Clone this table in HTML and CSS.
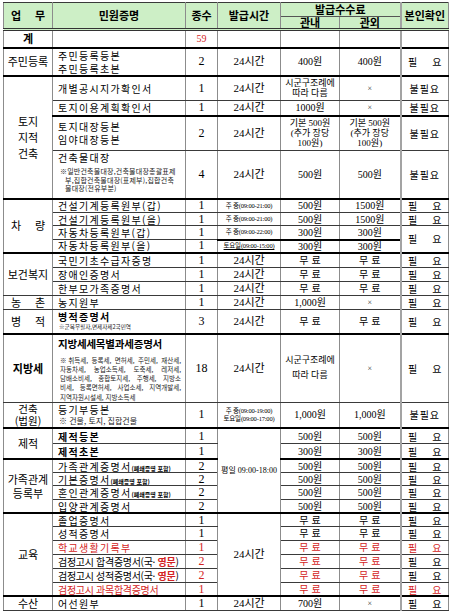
FILE: index.html
```html
<!DOCTYPE html>
<html lang="ko">
<head>
<meta charset="utf-8">
<title>민원증명 발급 안내</title>
<link rel="stylesheet" href="styles.css">
</head>
<body>
<table class="tbl">
<colgroup>
<col class="c1"><col class="c2"><col class="c3"><col class="c4"><col class="c5"><col class="c6"><col class="c7">
</colgroup>
<thead>
<tr class="h1"><th rowspan="2" class="dbl"><span class="sp"><span>업</span><span>무</span></span></th><th rowspan="2" class="dbl">민원증명</th><th rowspan="2" class="dbl">종수</th><th rowspan="2" class="dbl">발급시간</th><th colspan="2" class="fee">발급수수료</th><th rowspan="2" class="dbl k">본인확인</th></tr>
<tr class="h2"><th class="dbl">관내</th><th class="dbl">관외</th></tr>
</thead>
<tbody>
<tr class="r18"><td class="cat b">계</td><td class="n"></td><td class="num red small">59</td><td></td><td></td><td></td><td class="k"></td></tr>

<tr class="r27 g"><td class="cat">주민등록</td><td class="n two">주민등록등본<br>주민등록초본</td><td class="num">2</td><td class="t">24시간</td><td class="f">400원</td><td class="f">400원</td><td class="k"><span class="py"><span>필</span><span>요</span></span></td></tr>

<tr class="r25 g"><td class="cat c3l" rowspan="4">토지<br>지적<br>건축</td><td class="n">개별공시지가확인서</td><td class="num">1</td><td class="t">24시간</td><td class="f s9">시군구조례에<br>따라 다름</td><td class="f x">×</td><td class="k bp">불필요</td></tr>
<tr class="r15"><td class="n">토지이용계획확인서</td><td class="num">1</td><td class="t">24시간</td><td class="f">1000원</td><td class="f x">×</td><td class="k bp">불필요</td></tr>
<tr class="r35 g"><td class="n two">토지대장등본<br>임야대장등본</td><td class="num">2</td><td class="t">24시간</td><td class="f s9">기본 500원<br>(추가 장당<br>100원)</td><td class="f s9">기본 500원<br>(추가 장당<br>100원)</td><td class="k bp">불필요</td></tr>
<tr class="r48"><td class="n top"><div class="nm">건축물대장</div><div class="note1"><span class="ln">※일반건축물대장,건축물대장총괄표제</span><span class="ln ind">부,집합건축물대장(표제부),집합건축</span><span class="ln ind">물대장(전유부분)</span></div></td><td class="num">4</td><td class="t">24시간</td><td class="f">500원</td><td class="f">500원</td><td class="k bp">불필요</td></tr>

<tr class="r14 g"><td class="cat" rowspan="4"><span class="sp"><span>차</span><span>량</span></span></td><td class="n">건설기계등록원부(갑)</td><td class="num">1</td><td class="t tt">주 중(09:00-21:00)</td><td class="f">500원</td><td class="f">1500원</td><td class="k"><span class="py"><span>필</span><span>요</span></span></td></tr>
<tr class="r13"><td class="n">건설기계등록원부(을)</td><td class="num">1</td><td class="t tt">주 중(09:00-21:00)</td><td class="f">500원</td><td class="f">1500원</td><td class="k"><span class="py"><span>필</span><span>요</span></span></td></tr>
<tr class="r14"><td class="n">자동차등록원부(갑)</td><td class="num">1</td><td class="t tt">주 중(09:00-22:00)</td><td class="f">300원</td><td class="f">300원</td><td class="k" rowspan="2"><span class="py"><span>필</span><span>요</span></span></td></tr>
<tr class="r13 mid"><td class="n">자동차등록원부(을)</td><td class="num">1</td><td class="t tt ul">토요일(09:00-15:00)</td><td class="f">300원</td><td class="f">300원</td></tr>

<tr class="r15 g"><td class="cat" rowspan="3">보건복지</td><td class="n">국민기초수급자증명</td><td class="num">1</td><td class="t">24시간</td><td class="f"><span class="ml"><span>무</span><span>료</span></span></td><td class="f"><span class="ml"><span>무</span><span>료</span></span></td><td class="k"><span class="py"><span>필</span><span>요</span></span></td></tr>
<tr class="r14"><td class="n">장애인증명서</td><td class="num">1</td><td class="t">24시간</td><td class="f"><span class="ml"><span>무</span><span>료</span></span></td><td class="f"><span class="ml"><span>무</span><span>료</span></span></td><td class="k"><span class="py"><span>필</span><span>요</span></span></td></tr>
<tr class="r14"><td class="n">한부모가족증명서</td><td class="num">1</td><td class="t">24시간</td><td class="f"><span class="ml"><span>무</span><span>료</span></span></td><td class="f"><span class="ml"><span>무</span><span>료</span></span></td><td class="k"><span class="py"><span>필</span><span>요</span></span></td></tr>

<tr class="r14"><td class="cat"><span class="sp"><span>농</span><span>촌</span></span></td><td class="n">농지원부</td><td class="num">1</td><td class="t">24시간</td><td class="f">1,000원</td><td class="f x">×</td><td class="k"><span class="py"><span>필</span><span>요</span></span></td></tr>

<tr class="r24"><td class="cat"><span class="sp"><span>병</span><span>적</span></span></td><td class="n top"><div class="nm bd">병적증명서</div><div class="note2">※군복무필자,면제자제2국민역</div></td><td class="num">3</td><td class="t">24시간</td><td class="f"><span class="ml"><span>무</span><span>료</span></span></td><td class="f"><span class="ml"><span>무</span><span>료</span></span></td><td class="k"><span class="py"><span>필</span><span>요</span></span></td></tr>

<tr class="r66 g"><td class="cat b">지방세</td><td class="n top"><div class="nm bd wide">지방세세목별과세증명서</div><div class="note3"><span class="ln just">※취득세, 등록세, 면허세, 주민세, 재산세,</span><span class="ln just">자동차세, 농업소득세, 도축세, 레저세,</span><span class="ln just">담배소비세, 종합토지세, 주행세, 지방소</span><span class="ln just">비세, 등록면허세, 사업소세, 지역개발세,</span><span class="ln">지역자원시설세, 지방소득세</span></div></td><td class="num">18</td><td class="t">24시간</td><td class="f s9 loose">시군구조례에<br>따라 다름</td><td class="f x">×</td><td class="k"><span class="py"><span>필</span><span>요</span></span></td></tr>

<tr class="r24"><td class="cat two law">건축<br>(법원)</td><td class="n top"><div class="nm">등기부등본</div><div class="note4">※ 건물, 토지, 집합건물</div></td><td class="num">1</td><td class="t tt">주 중(09:00-19:00)<br>토요일(09:00-17:00)</td><td class="f">1,000원</td><td class="f">1,000원</td><td class="k bp">불필요</td></tr>

<tr class="r16 g"><td class="cat" rowspan="2">제적</td><td class="n bd">제적등본</td><td class="num">1</td><td class="t wk" rowspan="6">평일 09:00-18:00</td><td class="f">500원</td><td class="f">500원</td><td class="k"><span class="py"><span>필</span><span>요</span></span></td></tr>
<tr class="r15"><td class="n bd">제적초본</td><td class="num">1</td><td class="f">300원</td><td class="f">300원</td><td class="k"><span class="py"><span>필</span><span>요</span></span></td></tr>

<tr class="r14 g"><td class="cat two" rowspan="4">가족관계<br>등록부</td><td class="n">가족관계증명서<span class="tiny">(폐쇄증명 포함)</span></td><td class="num">2</td><td class="f">500원</td><td class="f">500원</td><td class="k"><span class="py"><span>필</span><span>요</span></span></td></tr>
<tr class="r13"><td class="n">기본증명서<span class="tiny">(폐쇄증명 포함)</span></td><td class="num">2</td><td class="f">500원</td><td class="f">500원</td><td class="k"><span class="py"><span>필</span><span>요</span></span></td></tr>
<tr class="r14"><td class="n">혼인관계증명서<span class="tiny">(폐쇄증명 포함)</span></td><td class="num">2</td><td class="f">500원</td><td class="f">500원</td><td class="k"><span class="py"><span>필</span><span>요</span></span></td></tr>
<tr class="r13"><td class="n">입양관계증명서</td><td class="num">2</td><td class="f">500원</td><td class="f">500원</td><td class="k"><span class="py"><span>필</span><span>요</span></span></td></tr>

<tr class="r14 g"><td class="cat" rowspan="6">교육</td><td class="n">졸업증명서</td><td class="num">1</td><td class="t" rowspan="6">24시간</td><td class="f"><span class="ml"><span>무</span><span>료</span></span></td><td class="f"><span class="ml"><span>무</span><span>료</span></span></td><td class="k"><span class="py"><span>필</span><span>요</span></span></td></tr>
<tr class="r14"><td class="n">성적증명서</td><td class="num">1</td><td class="f"><span class="ml"><span>무</span><span>료</span></span></td><td class="f"><span class="ml"><span>무</span><span>료</span></span></td><td class="k"><span class="py"><span>필</span><span>요</span></span></td></tr>
<tr class="r14"><td class="n red">학교생활기록부</td><td class="num red">1</td><td class="f red"><span class="ml"><span>무</span><span>료</span></span></td><td class="f red"><span class="ml"><span>무</span><span>료</span></span></td><td class="k red"><span class="py"><span>필</span><span>요</span></span></td></tr>
<tr class="r14"><td class="n nar">검정고시 합격증명서(국· <span class="red b">영문</span>)</td><td class="num red">2</td><td class="f red"><span class="ml"><span>무</span><span>료</span></span></td><td class="f red"><span class="ml"><span>무</span><span>료</span></span></td><td class="k"><span class="py"><span>필</span><span>요</span></span></td></tr>
<tr class="r14"><td class="n nar">검정고시 성적증명서(국· <span class="red b">영문</span>)</td><td class="num red">2</td><td class="f red"><span class="ml"><span>무</span><span>료</span></span></td><td class="f red"><span class="ml"><span>무</span><span>료</span></span></td><td class="k"><span class="py"><span>필</span><span>요</span></span></td></tr>
<tr class="r13"><td class="n nar red">검정고시 과목합격증명서</td><td class="num red">1</td><td class="f red"><span class="ml"><span>무</span><span>료</span></span></td><td class="f red"><span class="ml"><span>무</span><span>료</span></span></td><td class="k red"><span class="py"><span>필</span><span>요</span></span></td></tr>

<tr class="r14 g"><td class="cat">수산</td><td class="n">어선원부</td><td class="num">1</td><td class="t">24시간</td><td class="f">700원</td><td class="f x">×</td><td class="k"><span class="py"><span>필</span><span>요</span></span></td></tr>
</tbody>
</table>
</body>
</html>
```

FILE: styles.css
```css
* { box-sizing: border-box; }
html, body { margin: 0; padding: 0; background: #ffffff; }

.tbl {
  border-collapse: collapse;
  table-layout: fixed;
  width: 445px;
  margin: 2px 0 0 3px;
  font-family: "Liberation Serif", "Noto Sans CJK KR", serif;
  font-size: 10px;
  color: #000;
}
.c1 { width: 49px; }
.c2 { width: 133px; }
.c3 { width: 32px; }
.c4 { width: 63px; }
.c5 { width: 59px; }
.c6 { width: 61px; }
.c7 { width: 48px; }

.tbl th, .tbl td {
  border-left: 1px solid #8c8c8c;
  border-right: 1px solid #8c8c8c;
  border-top: 1px solid #3a3a3a;
  border-bottom: 1px solid #3a3a3a;
  padding: 0 1px;
  text-align: center;
  vertical-align: middle;
  line-height: 11px;
  white-space: nowrap;
}

.tbl th {
  background: #cdefc6;
  font-family: "Noto Sans CJK KR", sans-serif;
  font-weight: 700;
  font-size: 11px;
  line-height: 11px;
}
.tbl th.dbl { border-bottom: 3px double #333; }
.tbl th.fee { border-bottom: 1px solid #555; }
.h1 { height: 14px; }
.h2 { height: 11px; }

.tbl .k { border-left: 2px solid #a3a3a3; }

.r13 { height: 13px; }
.r14 { height: 14px; }
.r15 { height: 15px; }
.r16 { height: 16px; }
.r18 { height: 18px; }
.r24 { height: 24px; }
.r25 { height: 25px; }
.r27 { height: 27px; }
.r35 { height: 35px; }
.r48 { height: 48px; }
.r66 { height: 66px; }

.tbl tr.g > td { border-top: 2px solid #000; }
.tbl tr.mid > td.f { border-top: 2px solid #000; }
.tbl tr.mid > td.tt { border-top: 2px solid #000; }

.cat {
  font-family: "Noto Sans CJK KR", sans-serif;
  font-size: 11px;
}
.tbl td.cat { line-height: 13px; }
.tbl td.cat.c3l { line-height: 16px; }
.tbl td.cat.two { line-height: 14px; }
.tbl td.cat.law { font-size: 10.5px; line-height: 12px; }

.sp, .py, .ml { display: inline-flex; justify-content: center; }
.sp { gap: 14px; }
.py { gap: 15px; }
.ml { gap: 3px; }
.b { font-weight: 700; }
.bd { font-weight: 700; }

.tbl td.n {
  text-align: left;
  padding-left: 5px;
  padding-right: 0;
  font-family: "Noto Sans CJK KR", sans-serif;
  font-size: 10px;
  letter-spacing: 1.3px;
}
.tbl td.n.two { line-height: 13px; }
.tbl td.n.nar { letter-spacing: -0.3px; }
.tbl td.top { vertical-align: top; padding-top: 1px; }
.nm { line-height: 12px; }
.nm.wide { letter-spacing: -0.2px; font-size: 10.5px; line-height: 14px; padding-top: 1px; }

.ln { display: block; text-align: left; white-space: nowrap; }
.ln.just { text-align: justify; text-align-last: justify; }

.note1 {
  font-size: 7px;
  line-height: 8.6px;
  letter-spacing: 0.2px;
  margin-top: 3px;
  padding-left: 2px;
  padding-right: 1px;
  color: #222;
}
.note1 .ind { padding-left: 5px; }
.note2 {
  white-space: nowrap;
  font-size: 5.6px;
  line-height: 8px;
  letter-spacing: 0;
  padding-left: 1px;
  color: #222;
}
.note3 {
  font-size: 6.5px;
  line-height: 9.3px;
  letter-spacing: 0;
  padding-left: 2px;
  padding-right: 4px;
  margin-top: 5px;
  color: #222;
}
.note4 {
  white-space: nowrap;
  font-size: 8px;
  line-height: 9px;
  letter-spacing: 0;
  padding-left: 1px;
  color: #222;
}

.tiny {
  font-size: 6px;
  line-height: 6px;
  font-weight: 700;
  letter-spacing: 0;
}

.num {
  font-size: 12px;
  font-family: "Liberation Serif", serif;
}
.num.small { font-size: 10px; }

.t {
  font-size: 11px;
  font-family: "Liberation Serif", "Noto Sans CJK KR", serif;
}
.tbl td.tt {
  font-size: 6.5px;
  line-height: 8px;
  letter-spacing: -0.2px;
  padding: 0;
}
.ul { text-decoration: underline; }
.tbl td.wk { font-size: 8px; }

.f { font-size: 10px; }
.tbl td.s9 { font-size: 9px; line-height: 10px; }
.tbl td.s9.loose { line-height: 15px; }
.x { font-size: 8px; color: #333; }

.k { font-family: "Noto Sans CJK KR", sans-serif; font-size: 10px; }
.bp { letter-spacing: 1px; }

.red { color: #d42424; }
```
